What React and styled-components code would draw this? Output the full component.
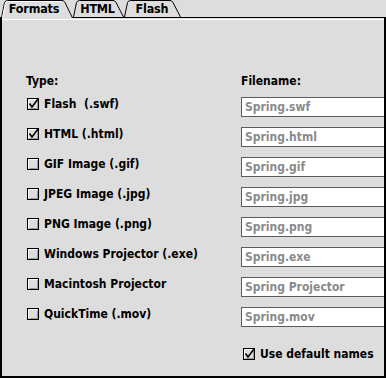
import React from 'react';
import styled, { createGlobalStyle } from 'styled-components';

const GlobalStyle = createGlobalStyle`
  html, body {
    margin: 0;
    padding: 0;
    background: #dddddd;
  }
  body {
    font-family: "DejaVu Sans Condensed", "DejaVu Sans", "Liberation Sans", sans-serif;
    font-weight: bold;
    font-size: 12px;
    color: #000;
  }
`;

const Window = styled.div`
  width: 386px;
  height: 378px;
  display: flex;
  flex-direction: column;
  overflow: hidden;
  background: #dddddd;
`;

const TabBar = styled.div`
  height: 17px;
  display: flex;
  align-items: flex-end;
  padding-left: 1px;
  position: relative;
  z-index: 1;
`;

const TabWrap = styled.div`
  position: relative;
  width: ${p => p.$w}px;
  height: ${p => (p.$active ? 18 : 17)}px;
  margin-bottom: ${p => (p.$active ? -1 : 0)}px;
  display: flex;
  justify-content: center;
  padding: 0 ${p => p.$pr}px 0 ${p => p.$pl}px;
  box-sizing: border-box;
`;

const TabShape = styled.svg`
  position: absolute;
  left: 0;
  top: 0;
`;

const TabLabel = styled.span`
  position: relative;
  line-height: 14px;
  padding-top: 2px;
  font-size: 12.5px;
  letter-spacing: -0.2px;
  white-space: nowrap;
`;

const Panel = styled.div`
  flex: 1;
  border-top: 1px solid #000;
  border-left: 2px solid #000;
  border-right: 2px solid #000;
  border-bottom: 2px solid #000;
  box-shadow: inset 0 1px 0 #dddddd, inset 0 2px 0 #ffffff;
  padding: 56px 0 0 24px;
  overflow: hidden;
`;

const Grid = styled.div`
  display: grid;
  grid-template-columns: 215px 200px;
  grid-auto-rows: 30px;
  grid-template-rows: 22px;
`;

const Heading = styled.div`
  line-height: 14px;
`;

const CheckRow = styled.label`
  display: flex;
  align-items: flex-start;
  gap: 5px;
  padding-top: 2px;
  padding-left: 1px;
  line-height: 13px;
  margin-top: ${p => p.$mt || 0}px;
`;

const Field = styled.div`
  margin-top: 1px;
  height: 20px;
  box-sizing: border-box;
  border: 1px solid #5c5c5c;
  background: #fff;
  color: #8a8a8a;
  padding-left: 3px;
  line-height: 18px;
  width: 200px;
`;

const Footer = styled.div`
  padding-left: 216px;
`;

function Tab({ label, w, pl, pr, active }) {
  const h = active ? 18 : 17;
  const d = `M0.5,${h} L3.5,2.5 Q4.5,0.5 6.5,0.5 L${w - 11},0.5 Q${w - 9},0.5 ${w - 8},2.5 L${w - 0.5},${h}`;
  return (
    <TabWrap $w={w} $pl={pl} $pr={pr} $active={active}>
      <TabShape width={w} height={h}>
        <path d={d + ' Z'} fill="#dddddd" stroke="none" />
        <path d={d} fill="none" stroke="#000" strokeWidth="1" />
        {active && (
          <path d={`M1.5,${h} L4.5,2.8 Q5,1.5 6.5,1.5 L${w - 11},1.5`} fill="none" stroke="#fff" strokeWidth="1" />
        )}
      </TabShape>
      <TabLabel>{label}</TabLabel>
    </TabWrap>
  );
}

function CheckBox({ checked }) {
  return (
    <svg width="12" height="12" style={{ flex: 'none' }}>
      <rect x="0.5" y="0.5" width="11" height="11" fill="#dddddd" stroke="#000" />
      <path d="M1.5,10.5 L1.5,1.5 L10.5,1.5" fill="none" stroke="#fff" />
      <path d="M2.5,10.5 L10.5,10.5 L10.5,2.5" fill="none" stroke="#999" />
      {checked && (
        <path d="M2.5,5.5 L5,9 L11,1" fill="none" stroke="#000" strokeWidth="1.6" />
      )}
    </svg>
  );
}

const rows = [
  ['Flash  (.swf)', 'Spring.swf', true],
  ['HTML (.html)', 'Spring.html', true],
  ['GIF Image (.gif)', 'Spring.gif', false],
  ['JPEG Image (.jpg)', 'Spring.jpg', false],
  ['PNG Image (.png)', 'Spring.png', false],
  ['Windows Projector (.exe)', 'Spring.exe', false],
  ['Macintosh Projector', 'Spring Projector', false],
  ['QuickTime (.mov)', 'Spring.mov', false],
];

export default function App() {
  return (
    <Window>
      <GlobalStyle />
      <TabBar>
        <Tab label="Formats" w={72} pl={6} pr={12} active />
        <Tab label="HTML" w={51} pl={5} pr={7} />
        <Tab label="Flash" w={57} pl={6} pr={7} />
      </TabBar>
      <Panel>
        <Grid>
          <Heading>Type:</Heading>
          <Heading>Filename:</Heading>
          {rows.map(([label, file, checked]) => (
            <React.Fragment key={label}>
              <CheckRow>
                <CheckBox checked={checked} />
                <span style={{ whiteSpace: 'pre' }}>{label}</span>
              </CheckRow>
              <Field>{file}</Field>
            </React.Fragment>
          ))}
        </Grid>
        <Footer>
          <CheckRow $mt={10}>
            <CheckBox checked />
            <span>Use default names</span>
          </CheckRow>
        </Footer>
      </Panel>
    </Window>
  );
}
